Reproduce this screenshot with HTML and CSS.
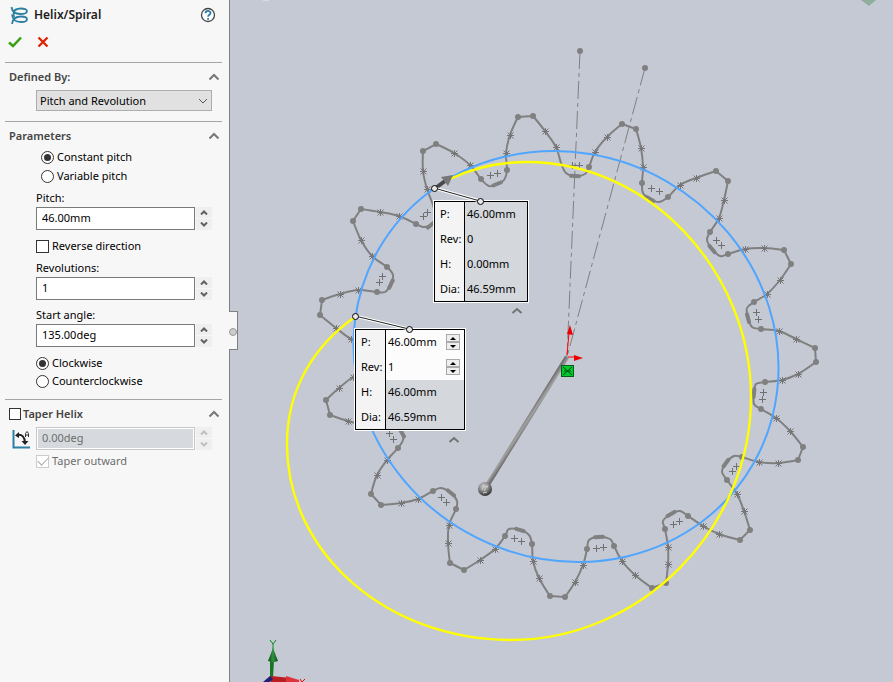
FILE: index.html
```html
<!DOCTYPE html>
<html lang="en">
<head>
<meta charset="utf-8">
<title>Helix/Spiral</title>
<link rel="stylesheet" href="styles.css">
</head>
<body>
<svg class="defs" aria-hidden="true">
  <symbol id="up" viewBox="0 0 8 5"><path d="M1 4.5 4 1.5 7 4.5" fill="none" stroke="currentColor" stroke-width="2"/></symbol>
  <symbol id="down" viewBox="0 0 8 5"><path d="M1 .5 4 3.500 7 .5" fill="none" stroke="currentColor" stroke-width="2"/></symbol>
  <symbol id="chevron" viewBox="0 0 12 8"><path d="M1.500 6.500 6 2l4.500 4.500" fill="none" stroke="currentColor" stroke-width="2"/></symbol>
</svg>
<div class="app">
  <aside class="panel">
    <header class="title-row">
      <svg class="helix" viewBox="0 0 19 19" fill="none" stroke="#2f7fa3" stroke-width="1.800">
        <path d="M1.500 1C2 4.500 4 8 10 8c3.500 0 7-.5 7-2.800S14 2.500 11 2.500C6 2.500 3.500 5 3.500 8c0 1 .3 2 1 3"/>
        <path d="M2 8.500c.5 5 4 7.500 9 7.500 3.500 0 6-.8 6-2.800s-2.500-2.700-6-2.700c-5 0-8.500 2.500-9 7.500"/>
      </svg>
      <h1>Helix/Spiral</h1>
      <button class="plain help" aria-label="Help">
        <svg viewBox="0 0 16 16" width="16" height="16"><circle cx="8" cy="8" r="6.500" fill="#fff" stroke="#444" stroke-width="1.300"/><path d="M5.500 6.300C5.500 3.200 10.500 3.200 10.500 6c0 1.800-2.400 1.800-2.400 3.800M8.100 11v1.800" fill="none" stroke="#2b7ea6" stroke-width="1.800"/></svg>
      </button>
    </header>
    <div class="actions">
      <button class="plain" aria-label="OK"><svg viewBox="0 0 14 12" width="14" height="12"><path d="M1 6.500 5 10l8-8.500" fill="none" stroke="#35a010" stroke-width="2.500"/></svg></button>
      <button class="plain" aria-label="Cancel"><svg viewBox="0 0 12 12" width="12" height="12"><path d="m1.500 1.500 9 9m0-9-9 9" fill="none" stroke="#e02000" stroke-width="2.300"/></svg></button>
    </div>

    <section class="group">
      <h2>Defined By:<button class="plain fold" aria-label="Collapse Defined By"><svg width="12" height="8"><use href="#chevron"/></svg></button></h2>
      <div class="body select-wrap">
        <select aria-label="Defined by"><option>Pitch and Revolution</option></select>
        <svg viewBox="0 0 10 6" width="10" height="6"><path d="m1 1 4 4 4-4" fill="none" stroke="#555"/></svg>
      </div>
    </section>

    <section class="group">
      <h2>Parameters<button class="plain fold" aria-label="Collapse Parameters"><svg width="12" height="8"><use href="#chevron"/></svg></button></h2>
      <div class="body">
        <div class="radios inset">
          <label class="pick"><input type="radio" name="kind" checked>Constant pitch</label>
          <label class="pick"><input type="radio" name="kind">Variable pitch</label>
        </div>
        <label class="caption" for="pitch">Pitch:</label>
        <div class="field"><input id="pitch" type="text" value="46.00mm"><span class="spin"><button aria-label="Increase pitch"><svg width="8" height="5"><use href="#up"/></svg></button><button aria-label="Decrease pitch"><svg width="8" height="5"><use href="#down"/></svg></button></span></div>
        <label class="pick reverse"><input type="checkbox">Reverse direction</label>
        <label class="caption" for="revs">Revolutions:</label>
        <div class="field"><input id="revs" type="text" value="1"><span class="spin"><button aria-label="Increase revolutions"><svg width="8" height="5"><use href="#up"/></svg></button><button aria-label="Decrease revolutions"><svg width="8" height="5"><use href="#down"/></svg></button></span></div>
        <label class="caption spaced" for="angle">Start angle:</label>
        <div class="field"><input id="angle" type="text" value="135.00deg"><span class="spin"><button aria-label="Increase angle"><svg width="8" height="5"><use href="#up"/></svg></button><button aria-label="Decrease angle"><svg width="8" height="5"><use href="#down"/></svg></button></span></div>
        <div class="radios turn">
          <label class="pick"><input type="radio" name="dir" checked>Clockwise</label>
          <label class="pick"><input type="radio" name="dir">Counterclockwise</label>
        </div>
      </div>
    </section>

    <section class="group taper">
      <h2><label class="pick"><input type="checkbox">Taper Helix</label><button class="plain fold" aria-label="Collapse Taper Helix"><svg width="12" height="8"><use href="#chevron"/></svg></button></h2>
      <div class="taper-row">
        <svg class="taper-icon" viewBox="0 0 18 20" width="18" height="20" fill="none"><path d="M1.500 1v17.500H18" stroke="#2b7ea6" stroke-width="2"/><path d="M5 6c5-1 8 2 8 8" stroke="#222" stroke-width="2"/><path d="M3 6.500 7 3v6zM9.500 12h7L13 16z" fill="#222"/><path d="M13.500 8V4.500l1.500-2 1.500 2V8m-3-2h3" stroke="#333"/></svg>
        <div class="field"><input type="text" value="0.00deg" aria-label="Taper angle" disabled><span class="spin"><button disabled aria-label="Increase taper"><svg width="8" height="5"><use href="#up"/></svg></button><button disabled aria-label="Decrease taper"><svg width="8" height="5"><use href="#down"/></svg></button></span></div>
      </div>
      <label class="pick outward"><input type="checkbox" checked disabled>Taper outward</label>
    </section>
    <button class="handle" aria-label="Hide panel"></button>
  </aside>

  <main class="canvas">
    <svg class="scene" viewBox="230 0 663 682" width="663" height="682">
      <defs>
        <linearGradient id="rod" gradientUnits="userSpaceOnUse" x1="523" y1="421" x2="529" y2="425"><stop offset="0" stop-color="#707070"/><stop offset=".5" stop-color="#a2a2a2"/><stop offset="1" stop-color="#6c6c6c"/></linearGradient>
        <radialGradient id="ball" cx=".4" cy=".3" r=".7"><stop offset="0" stop-color="#ccc"/><stop offset=".5" stop-color="#888"/><stop offset="1" stop-color="#333"/></radialGradient>
        <linearGradient id="green"><stop offset="0" stop-color="#0b4d12"/><stop offset=".5" stop-color="#339044"/><stop offset="1" stop-color="#0b4d12"/></linearGradient>
      </defs>
      <path d="M861 0h15l-7 6z" fill="#8fae9b"/>
      <path d="M263 0h6" stroke="#eee"/>
      <g fill="none" stroke="#808080" stroke-dasharray="18 4 4 4"><path d="M580 51 567 357M645 68 567 357"/></g>
      <g fill="#808080"><circle cx="580" cy="51" r="3"/><circle cx="645" cy="68" r="3"/></g>
      <g id="gear"></g>
      <ellipse cx="566" cy="356.500" rx="215.800" ry="202" transform="rotate(29.700 566 356.500)" fill="none" stroke="#50a5ff" stroke-width="2"/>
      <path d="M450 179C473 168 500 162 527 162 650 162 751 272 751 397 751 530 640 640 511 640 387 640 287 553 287 444 287 388 315 345 355 317" fill="none" stroke="#ff0" stroke-width="2.400"/>
      <path d="M567 357 485 489" stroke="url(#rod)" stroke-width="4.500"/>
      <circle cx="485" cy="489" r="7" fill="url(#ball)"/>
      <path d="m484 491 4-6m-6 5 2-4 4 1m-5 6 4-1" fill="none" stroke="#ccc"/>
      <path d="M567 355 569 333M568 357h8" stroke="red"/><path d="m570 325-3 9 6 1zM583 358l-9-3v6z" fill="#e00"/>
      <rect x="561.500" y="365.500" width="12" height="11" fill="#00c92b" stroke="#075c19"/><path d="m563 367 9 8m0-8-9 8M564 371h7" stroke="#064d15"/>
      <path d="m437 187 8-6" stroke="#484848" stroke-width="4"/><path d="m453 175-12 2 7 9z" fill="#777"/>
      <g fill="none" stroke="#737373" stroke-width="2"><path d="m512.500 313 4.500-4 4.500 4M449.500 442l4.500-4 4.500 4"/></g>
      <path d="M270 678v-18h4l-1 18z" fill="#187525"/><path d="m273 648-5 13q5 2 10 0z" fill="url(#green)"/>
      <path d="m270 640 3 4 3-4m-3 4v6" fill="none" stroke="#008c1d"/>
      <path d="m271 676 20 2v4h-20z" fill="#b91e25"/><path d="m286 676 13 4v2h-13z" fill="#de333b"/><path d="m300 679 2 3 3-3" fill="none" stroke="red"/>
      <path d="m263 682 7-6 3 3-3 3z" fill="#202078"/>
    </svg>

    <table class="callout start">
      <tr><th>P:</th><td>46.00mm</td></tr>
      <tr><th>Rev:</th><td>0</td></tr>
      <tr><th>H:</th><td>0.00mm</td></tr>
      <tr><th>Dia:</th><td>46.59mm</td></tr>
    </table>
    <table class="callout end">
      <tr class="edit"><th><label for="p2">P:</label></th><td><div><input id="p2" type="text" value="46.00mm"><span class="mini"><button aria-label="Increase"></button><button class="dn" aria-label="Decrease"></button></span></div></td></tr>
      <tr class="edit"><th><label for="r2">Rev:</label></th><td><div><input id="r2" type="text" value="1"><span class="mini"><button aria-label="Increase"></button><button class="dn" aria-label="Decrease"></button></span></div></td></tr>
      <tr><th>H:</th><td>46.00mm</td></tr>
      <tr><th>Dia:</th><td>46.59mm</td></tr>
    </table>
    <svg class="scene leaders" viewBox="230 0 663 682" width="663" height="682" fill="none">
      <path d="M434 188 480 201M355 316 409 329" stroke="#fff" stroke-width="3"/>
      <path d="M434 188 480 201M355 316 409 329" stroke="#222"/>
      <g fill="#e8e8e8" stroke="#000"><circle cx="434.500" cy="188.500" r="3"/><circle cx="480.500" cy="201.500" r="3"/><circle cx="355.500" cy="316.500" r="3"/><circle cx="409.500" cy="329.500" r="3"/></g>
    </svg>
  </main>
</div>
<script src="gear.js"></script>
</body>
</html>
```
FILE: gear.js
```js
// Sketch profile of the gear, clockwise.
// s = spline point, d = arc end, t = tooth corner, p = plain point, f = root arc joint
const profile = `s427,189 s423,171 t423,151 t436,144 s454,153 s470,165 d481,179 p489,186 f497,184 p504,180 d507,170
s506,153 s510,135 t518,117 t533,116 s545,131 s556,147 p561,163 p566,173 f575,176 p585,174 d589,167
s595,152 s607,137 t622,124 t636,129 s641,148 s643,167 d642,183 p643,193 f650,199 p659,202 d668,197
s680,185 s696,178 t716,171 t728,181 s724,200 s719,218 d710,232 p707,240 f712,249 p720,256 d728,254
s745,249 s764,248 t784,250 t791,264 s780,280 s767,294 d754,302 p747,308 f748,318 p752,327 d761,329
s779,331 s796,339 t815,348 t816,362 s798,374 s782,380 d765,382 p756,384 f754,393 p754,404 d761,409
s776,418 s790,431 t803,447 t798,460 s778,463 s759,462 d742,457 p734,456 f726,463 p722,472 d727,480
s737,494 s744,511 t750,530 t740,540 s719,534 s703,526 d688,516 p680,511 f671,514 p663,521 d665,529
s668,547 s668,564 t666,583 t652,588 s635,575 s622,561 d614,546 p610,539 f599,537 p589,540 d587,549
s583,565 s575,582 t565,597 t550,596 s539,578 s533,561 d532,544 p529,535 f520,530 p509,529 d505,536
s495,549 s480,560 t464,570 t450,563 s448,543 s449,525 d456,509 p457,501 f451,493 p441,488 d433,491
s418,499 s401,503 t381,505 t371,494 s377,475 s387,460 d398,448 p403,440 f402,433 p394,424 d382,424
s365,425 s348,421 t330,415 t326,400 s339,388 s353,377 d366,371 p373,362 f373,354 p371,347 d364,343
s351,339 s336,328 t320,315 t322,300 s340,294 s358,290 d377,292 p385,292 f391,284 p393,275 d387,267
s372,256 s361,240 t353,221 t361,209 s380,212 s399,216 d416,224 p423,227 f431,225 p435,217 p433,205`
  .split(/\s+/).map(s => {
    const [x, y] = s.slice(1).split(",").map(Number);
    return { k: s[0], x, y };
  });
const centres = [[490,175],[497,173],[572,165],[579,165],[651,188],[659,191],[716,240],[721,245],[756,312],[758,319],
  [763,392],[762,399],[736,466],[732,471],[679,521],[673,524],[603,547],[596,548],[521,541],[514,538],[446,502],[441,497],
  [393,439],[389,433],[379,282],[382,276],[423,216],[427,212]];

const n = profile.length;
const tangent = i => {
  if (profile[i].k === "t") return [0, 0];
  const a = profile[(i + n - 1) % n], b = profile[(i + 1) % n];
  return [(b.x - a.x) / 6, (b.y - a.y) / 6];
};
let outline = `M${profile[0].x} ${profile[0].y}`;
let stars = "", joints = "", dots = "";
profile.forEach((p, i) => {
  const j = (i + 1) % n, q = profile[j], a = tangent(i), b = tangent(j);
  outline += `C${p.x + a[0]} ${p.y + a[1]} ${q.x - b[0]} ${q.y - b[1]} ${q.x} ${q.y}`;
  if (p.k === "s") stars += `M${p.x - 3} ${p.y + .5}h7m-3.500-3.500v7m-3-6.500 6 6m0-6-6 6`;
  if (p.k === "d" || p.k === "t") dots += `<circle cx="${p.x}" cy="${p.y}" r="3"/>`;
  if (p.k === "f") {
    const u = profile[i - 1], v = profile[j];
    const d = Math.hypot(v.x - u.x, v.y - u.y);
    const dx = (v.x - u.x) / d * 4, dy = (v.y - u.y) / d * 4;
    joints += `M${p.x - dx} ${p.y - dy}L${p.x + dx} ${p.y + dy}`;
  }
});
const plus = centres.map(c => `M${c[0] - 3} ${c[1] + .5}h7m-3.500-3.500v7`).join("");
document.getElementById("gear").innerHTML =
  `<g fill="none" stroke="#808080"><path stroke-width="2" d="${outline}"/><path stroke="#767676" d="${stars}"/><path stroke="#707070" d="${plus}"/><path stroke-width="4" stroke-linecap="round" d="${joints}"/></g><g fill="#808080">${dots}</g>`;
```
FILE: styles.css
```css
* { box-sizing: border-box; }
body { margin: 0; font: 11px/18px "Noto Sans", "Open Sans", sans-serif; color: #000; background: #c5c9d4; }
button, input, select { font: inherit; color: inherit; margin: 0; padding: 0; }
svg { display: block; }
.defs { position: absolute; width: 0; height: 0; }
.app { display: flex; min-height: 100vh; }

.panel { position: relative; z-index: 2; flex: 0 0 230px; min-width: 0; background: #f7f7f7; border-right: 1px solid #808080; padding: 6px 7px 0 5px; }
.plain { border: 0; background: none; display: flex; }
.title-row { display: flex; align-items: center; padding: 0 6px 0 5px; height: 18px; }
.helix { width: 19px; height: 19px; }
h1 { margin: 0 auto 0 5px; font-size: 12px; line-height: 18px; font-weight: 600; color: #1c1c1c; }
.actions { display: flex; gap: 15px; align-items: center; height: 37px; padding: 0 0 2px 3px; }
.group { border-top: 1px solid #a6a6a6; margin-top: 1px; padding: 5px 0 10px; }
.group + .group { margin-top: 0; }
h2 { display: flex; justify-content: space-between; align-items: center; margin: 0; padding: 0 2px 0 4px; height: 18px; font-size: 11px; font-weight: 600; color: #444; }
.fold { color: #777; }
.body { margin: 0 10px 0 31px; }
.select-wrap { display: flex; align-items: center; margin-top: 4px; }
select { appearance: none; width: 100%; height: 21px; border: 1px solid #adadad; border-radius: 0; background: #e1e1e1; padding: 0 3px; }
.select-wrap svg { flex: none; margin: 0 4px 0 -14px; pointer-events: none; }
.select-wrap select { flex: 1 0 100%; }
.radios { display: flex; flex-direction: column; }
.inset { padding: 3px 0 0 5px; gap: 1px; }
.turn { padding-top: 7px; }
.pick { display: flex; align-items: center; gap: 3px; height: 18px; }
.pick input { appearance: none; flex: none; width: 13px; height: 13px; border: 1px solid #333; background: #fff; }
.pick input[type=radio] { border-radius: 50%; display: grid; place-items: center; }
.pick input[type=radio]:checked::before { content: ""; width: 7px; height: 7px; border-radius: 50%; background: #333; }
.caption { display: block; margin-top: 4px; height: 18px; }
.field { display: flex; gap: 1px; }
.field input { flex: 1; width: 0; min-width: 0; height: 23px; border: 1px solid #7a7a7a; background: #fff; padding: 0 5px 2px; }
.spin { display: flex; flex-direction: column; gap: 1px; width: 16px; }
.spin button { flex: 1; border: 0; background: #efefef; display: flex; align-items: center; justify-content: center; color: #606060; }
.reverse { margin: 7px 0 3px; }
.spaced { margin-top: 6px; }
.group:nth-of-type(2) { padding-bottom: 9px; }
.taper h2 .pick { gap: 2px; }
.taper h2 input { width: 12px; height: 12px; }
.taper-row { display: flex; align-items: center; gap: 6px; margin: 4px 10px 0 7px; }
.taper-row .field { flex: 1; }
.taper .field input { background: #d6dade; color: #6d6d6d; border-color: #c8c8c8; box-shadow: inset 0 0 0 1px #fff; }
.taper .spin button { color: #bfbfbf; }
.outward { margin: 2px 0 0 31px; color: #6d6d6d; }
.outward input { border-color: #ccc; display: grid; place-items: center; }
.outward input::before { content: ""; width: 9px; height: 5px; border: solid #aaa; border-width: 0 0 1px 1px; transform: rotate(-45deg); margin-bottom: 3px; }
.handle { position: absolute; right: -9px; top: 311px; width: 9px; height: 39px; border: 1px solid #808080; border-left: 0; background: #f7f7f7; }
.handle::before { content: ""; position: absolute; left: 0; top: 16px; width: 6px; height: 6px; border: 1px solid #999; border-radius: 50%; background: #ccc; }

.canvas { position: relative; flex: 1; min-width: 0; overflow: hidden; }
.scene { position: absolute; left: 0; top: 0; }
.leaders { pointer-events: none; }
.callout { position: absolute; border-collapse: collapse; border: 1px solid #000; outline: 1px solid #fff; background: #d4d8dc; }
.callout.start { left: 204px; top: 201px; width: 94px; }
.callout.end { left: 125px; top: 329px; width: 110px; }
.callout tr { height: 25px; }
.callout th { width: 30px; background: #f4f4f4; font-weight: 400; text-align: left; padding: 0 0 0 5px; border-right: 1px solid #000; }
.callout td { padding: 0 2px; }
.callout .edit td { background: #fcfcfc; }
.callout td div { display: flex; align-items: center; }
.callout input { flex: 1; min-width: 0; width: 0; border: 0; background: none; }
.mini { display: flex; flex-direction: column; margin-right: 2px; }
.mini button { width: 14px; height: 8px; border: 1px solid #aaa; background: #eee; display: grid; place-items: center; }
.mini button::before { content: ""; border: solid transparent; border-width: 0 3px 3px; border-bottom-color: #000; }
.mini .dn::before { border-width: 3px 3px 0; border-color: #000 transparent transparent; }
```
